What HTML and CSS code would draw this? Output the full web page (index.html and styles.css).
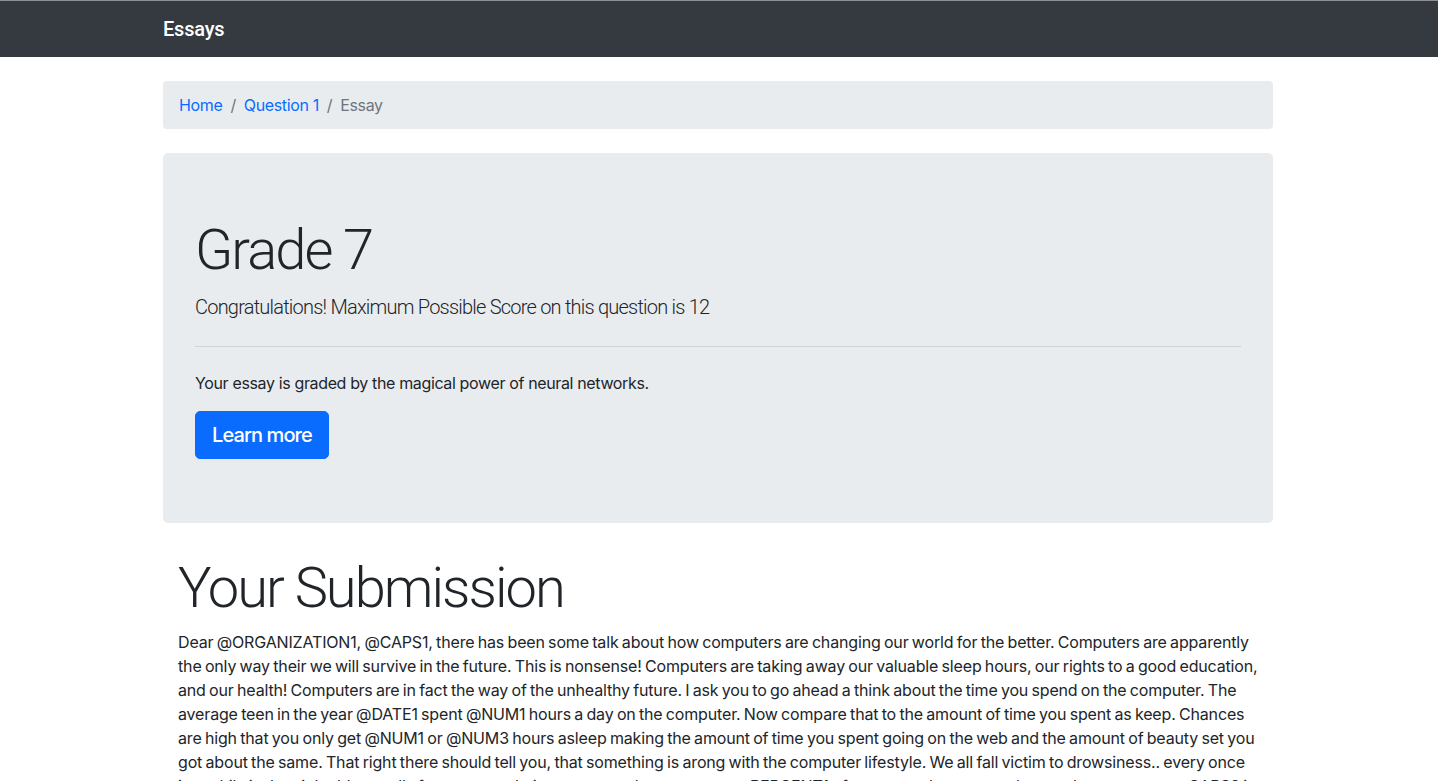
FILE: index.html
```html
<!DOCTYPE html>
<html lang="en">
<head>
<meta charset="utf-8">
<title>Essays</title>
<link rel="stylesheet" href="styles.css">
</head>
<body>
<nav class="navbar">
  <div class="navbar-inner">
    <a class="brand" href="#">Essays</a>
  </div>
</nav>
<main class="page">
  <nav class="breadcrumb" aria-label="breadcrumb">
    <ol class="crumbs">
      <li class="crumb"><a href="#">Home</a></li>
      <li class="crumb"><a href="#">Question 1</a></li>
      <li class="crumb active">Essay</li>
    </ol>
  </nav>
  <section class="jumbotron">
    <h1 class="display">Grade 7</h1>
    <p class="lead">Congratulations! Maximum Possible Score on this question is 12</p>
    <hr class="divider">
    <p class="info">Your essay is graded by the magical power of neural networks.</p>
    <a class="btn-primary" href="#">Learn more</a>
  </section>
  <section class="submission">
    <h1 class="display">Your Submission</h1>
    <p class="essay">Dear @ORGANIZATION1, @CAPS1, there has been some talk about how computers are changing our world for the better. Computers are apparently the only way their we will survive in the future. This is nonsense! Computers are taking away our valuable sleep hours, our rights to a good education, and our health! Computers are in fact the way of the unhealthy future. I ask you to go ahead a think about the time you spend on the computer. The average teen in the year @DATE1 spent @NUM1 hours a day on the computer. Now compare that to the amount of time you spent as keep. Chances are high that you only get @NUM1 or @NUM3 hours asleep making the amount of time you spent going on the web and the amount of beauty set you got about the same. That right there should tell you, that something is arong with the computer lifestyle. We all fall victim to drowsiness.. every once in a while in the night. It's usually from too much time spent on the computer. @PERCENT1 of teens say they stay up late on the computer. @CAPS2 is the cause of lack of sleep and it hurts our grades in school. If you are tired in class you can not learn, and if you can not learn you will not get a good education. Computers are also bad for our health because we sit in front of them for hours instead of going outside to play and exercise.</p>
  </section>
</main>
</body>
</html>
```
FILE: styles.css
```css
* { box-sizing: border-box; }

body {
  margin: 0;
  font-family: Inter, "Noto Sans", sans-serif;
  font-size: 16px;
  line-height: 1.5;
  letter-spacing: -0.36px;
  color: #212529;
  background: #fff;
}

a { text-decoration: none; }

.navbar {
  background: #343a40;
  border-top: 1px solid #8e9093;
  padding: 8px 16px;
}

.navbar-inner {
  max-width: 1140px;
  margin: 0 auto;
  padding: 0 16px 0 14px;
  display: flex;
  align-items: center;
}

.brand {
  font-family: Roboto, "Noto Sans", sans-serif;
  font-size: 20px;
  font-weight: 500;
  letter-spacing: -0.2px;
  line-height: 30px;
  padding: 5px 0;
  color: #fff;
}

.page {
  max-width: 1140px;
  margin: 24px auto 0;
  padding: 0 16px 0 14px;
}

.breadcrumb {
  background: #e9ecef;
  border-radius: 4px;
  padding: 12px 16px;
  margin-bottom: 24px;
}

.crumbs {
  list-style: none;
  margin: 0;
  padding: 0;
  display: flex;
  flex-wrap: wrap;
}

.crumb a { color: #0a6cff; }

.crumb + .crumb { padding-left: 8px; }

.crumb + .crumb::before {
  content: "/";
  color: #6c757d;
  padding-right: 8px;
}

.crumb.active { color: #6c757d; }

.jumbotron {
  background: #e9ecef;
  border-radius: 5px;
  padding: 64px 32px;
  margin-bottom: 32px;
}

.display {
  font-family: Roboto, "Noto Sans", sans-serif;
  font-size: 56px;
  font-weight: 300;
  line-height: 1.2;
  letter-spacing: -0.035em;
  margin: 0 0 8px;
}

.lead {
  font-family: Roboto, "Noto Sans", sans-serif;
  font-size: 20px;
  font-weight: 300;
  line-height: 30px;
  letter-spacing: -0.78px;
  margin: 0 0 16px;
}

.divider {
  border: 0;
  border-top: 1px solid rgba(0, 0, 0, 0.1);
  margin: 24px 0;
}

.info { margin: 0 0 16px; }

.btn-primary {
  display: inline-block;
  background: #0a6cff;
  color: #fff;
  font-size: 20px;
  font-weight: 500;
  line-height: 30px;
  letter-spacing: -0.9px;
  padding: 8px 16px;
  border: 1px solid #0a6cff;
  border-radius: 5px;
}

.submission {
  padding: 0 15px;
}

.essay {
  margin: 0 0 16px;
  letter-spacing: -0.16px;
  word-spacing: -1px;
}
```
